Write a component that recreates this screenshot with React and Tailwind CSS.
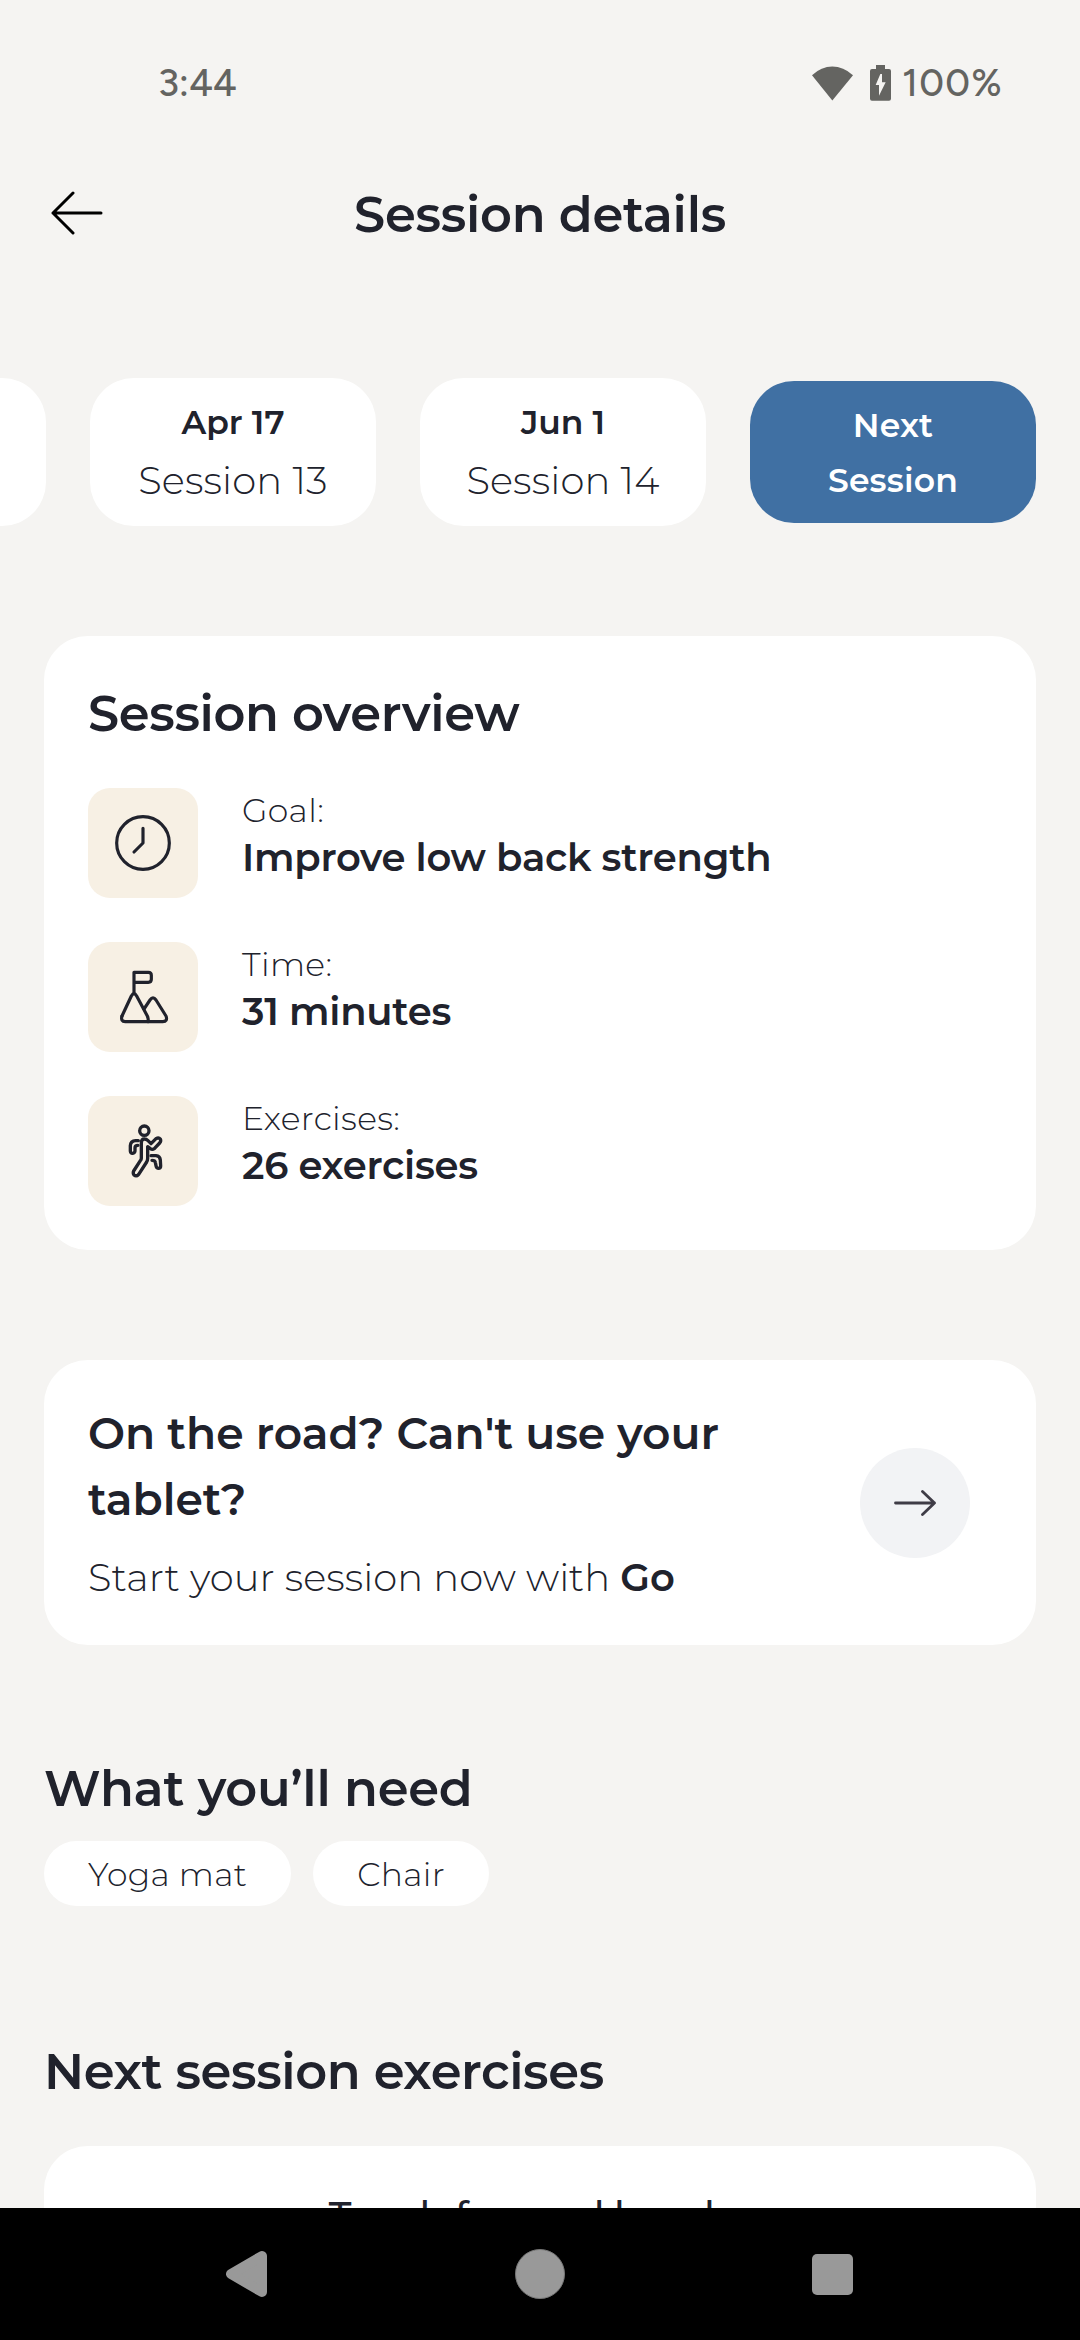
function StatusBar() {
  return (
    <div className="flex h-[166px] items-center justify-between pr-[74px] pl-[158px] font-['Figtree','Lato',sans-serif] text-[38.5px] font-medium text-[#646461]">
      <span className="tracking-[-0.2px]">3:44</span>
      <div className="flex items-center">
        <svg className="mr-[17px] h-[35px] w-[41px]" viewBox="66 45 123 104" fill="currentColor">
          <path d="M66 72Q94 46 127 46Q160 46 189 72L127 148Z" />
        </svg>
        <svg className="mr-[11px] h-9 w-[21px]" viewBox="240 45 63 108">
          <path d="M258 45h27v12h12q6 0 6 6v83q0 6-6 6h-51q-6 0-6-6V63q0-6 6-6h12z" fill="currentColor" />
          <path d="M271 72L257 105H267V137L287 97H276V72Z" fill="#f5f4f2" />
        </svg>
        <span className="w-[104px] tracking-[1.2px]">100%</span>
      </div>
    </div>
  );
}

function Header() {
  return (
    <header className="grid h-24 grid-cols-[1fr_auto_1fr] items-center px-[51px]">
      <svg className="h-[46px] w-[52px]" viewBox="0 0 52 46" fill="none" stroke="#000" strokeWidth="3" strokeLinecap="round" strokeLinejoin="round">
        <path d="M50 22H2M22 2L2 22L22 42" />
      </svg>
      <h1 className="text-[49.5px] leading-[66px] font-semibold tracking-[-0.25px]">Session details</h1>
    </header>
  );
}

function SessionChip({ date, name }) {
  return (
    <div className="flex h-[148px] w-[286px] shrink-0 flex-col items-center rounded-[44px] bg-white pt-[19px]">
      <span className="text-[33px] leading-[50px] font-semibold">{date}</span>
      <span className="text-[38.5px] leading-[68px] font-light tracking-[0.15px]">{name}</span>
    </div>
  );
}

function ClockIcon() {
  return (
    <svg className="size-full" viewBox="0 0 330 330" fill="none" stroke="currentColor" strokeWidth="9.5" strokeLinecap="round" strokeLinejoin="round">
      <circle cx="165" cy="165" r="79" />
      <path d="M165 121V165L138 192" />
    </svg>
  );
}

function MountainIcon() {
  return (
    <svg className="size-full" viewBox="0 0 330 330" fill="none" stroke="currentColor" strokeWidth="9.5" strokeLinecap="round" strokeLinejoin="round">
      <path d="M138 153V91H181Q190 91 190 100V112Q190 121 181 121H138" />
      <path d="M102 222L130 162Q138 148 146 162L178 222Q182 231 180 239" />
      <path d="M102 222Q97 238 112 239H224Q240 238 234 222L204 174Q195 161 186 174L168 201" />
    </svg>
  );
}

function RunnerIcon() {
  return (
    <svg className="size-full" viewBox="-96 -57 330 330" fill="none" stroke="currentColor" strokeWidth="10" strokeLinecap="round" strokeLinejoin="round">
      <circle cx="73" cy="47" r="14" />
      <path d="M64 130V84Q64 72 73 72Q79 72 84 77L93 86L108 71Q116 66 121 72Q124 78 119 84L103 101Q97 105 91 101L83 95V130Q83 136 80 141L56 178Q49 186 42 180Q38 175 41 168L61 137Q64 134 64 130Z" />
      <path d="M55 77H47Q32 78 31 92V108Q32 116 38 115Q44 114 45 108V98Q45 91 54 91" />
      <path d="M93 122H108Q120 123 121 135L122 153Q122 160 115 160Q109 159 108 152L106 142Q105 136 96 136" />
    </svg>
  );
}

function OverviewItem({ icon, label, value }) {
  return (
    <div className="flex gap-11">
      <div className="size-[110px] shrink-0 rounded-[22px] bg-[#f7f0e4]">{icon}</div>
      <div>
        <div className="text-[33px] leading-[44px] font-light tracking-[0.35px]">{label}</div>
        <div className="text-[38.5px] leading-[52px] font-semibold tracking-[-0.24px]">{value}</div>
      </div>
    </div>
  );
}

function Pill({ children }) {
  return (
    <span className="flex h-[65px] items-center rounded-full bg-white px-11 pt-0.5 text-[33px] font-light tracking-[0.3px]">
      {children}
    </span>
  );
}

function NavBar() {
  return (
    <nav className="flex h-[132px] shrink-0 items-center justify-between bg-black pr-[227px] pl-[225px]">
      <svg className="h-[50px] w-[43px]" viewBox="0 0 43 50" fill="#999" stroke="#999" strokeWidth="10" strokeLinejoin="round">
        <path d="M6 25L37 7V43Z" />
      </svg>
      <div className="size-[50px] rounded-full border border-[#777] bg-[#999]" />
      <div className="size-[41px] rounded-[5px] bg-[#999]" />
    </nav>
  );
}

export default function App() {
  return (
    <div className="flex h-[2340px] w-[1080px] flex-col overflow-hidden bg-[#f5f4f2] font-['Montserrat','Inter',sans-serif] text-[#20222c]">
      <div className="min-h-0 flex-1 overflow-hidden">
        <StatusBar />
        <Header />
        <div className="mt-[116px] flex items-center justify-end gap-11 overflow-hidden pr-11">
          <div className="h-[148px] w-[286px] shrink-0 rounded-[44px] bg-white" />
          <SessionChip date="Apr 17" name="Session 13" />
          <SessionChip date="Jun 1" name="Session 14" />
          <button className="h-[142px] w-[286px] shrink-0 rounded-[44px] bg-[#4070a3] px-11 pt-px text-center text-[33px] leading-[55px] font-semibold tracking-[0.2px] text-white">
            Next Session
          </button>
        </div>

        <section className="mx-11 mt-[110px] rounded-[44px] bg-white p-11">
          <h2 className="text-[49.5px] leading-[66px] font-semibold tracking-[-0.34px]">Session overview</h2>
          <div className="mt-[42px] flex flex-col gap-11">
            <OverviewItem icon={<ClockIcon />} label="Goal:" value="Improve low back strength" />
            <OverviewItem icon={<MountainIcon />} label="Time:" value="31 minutes" />
            <OverviewItem icon={<RunnerIcon />} label="Exercises:" value="26 exercises" />
          </div>
        </section>

        <section className="mx-11 mt-[110px] flex h-[285px] items-center justify-between rounded-[44px] bg-white pr-[66px] pl-11">
          <div className="w-[700px] pt-0.5">
            <h3 className="text-[44px] leading-[66px] font-semibold">On the road? Can't use your tablet?</h3>
            <p className="mt-[17px] text-[38.5px] leading-[58px] font-light tracking-[0.08px]">
              Start your session now with <span className="font-semibold">Go</span>
            </p>
          </div>
          <div className="flex size-[110px] items-center justify-center rounded-full bg-[#f2f3f5]">
            <svg className="h-[26px] w-[42px]" viewBox="0 0 42 26" fill="none" stroke="#3f3c46" strokeWidth="2.8" strokeLinecap="round" strokeLinejoin="round">
              <path d="M1.5 13H40.5M28.5 1.5L40.5 13L28.5 24.5" />
            </svg>
          </div>
        </section>

        <h2 className="mx-11 mt-[110px] text-[49.5px] leading-[66px] font-semibold tracking-[-0.22px]">What you’ll need</h2>
        <div className="mx-11 mt-5 flex gap-[22px]">
          <Pill>Yoga mat</Pill>
          <Pill>Chair</Pill>
        </div>

        <h2 className="mx-11 mt-[132px] text-[49.5px] leading-[66px] font-semibold tracking-[-0.35px]">Next session exercises</h2>
        <section className="mx-11 mt-[42px] h-[200px] rounded-[44px] bg-white pt-[41px] pr-[37px] text-center text-[38.5px] leading-[58px] font-medium tracking-[-0.5px]">
          Touch forward bend
        </section>
      </div>
      <NavBar />
    </div>
  );
}
